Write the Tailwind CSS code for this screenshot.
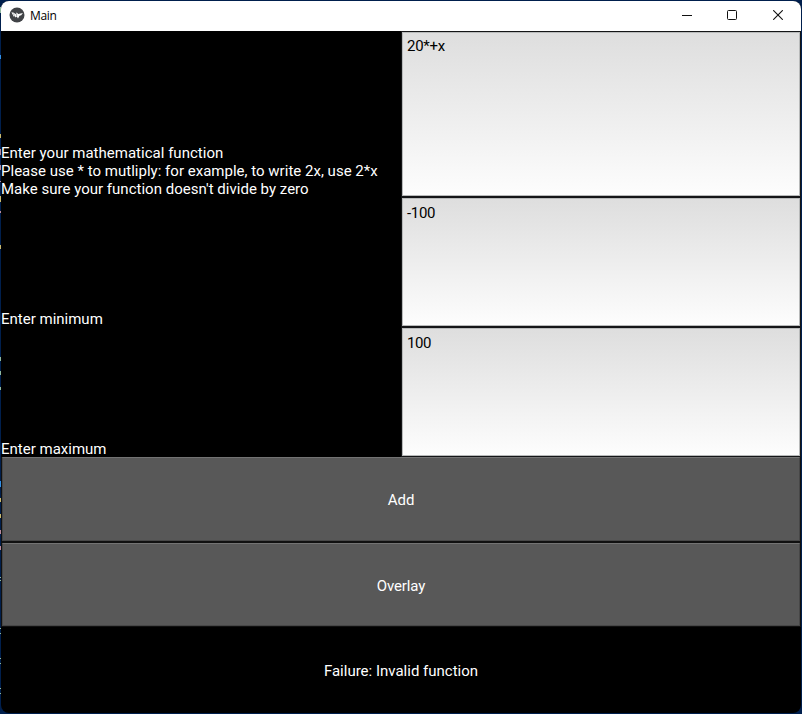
<!DOCTYPE html>
<html lang="en">
<head>
<meta charset="utf-8">
<title>Main</title>
<script src="https://cdn.jsdelivr.net/npm/@tailwindcss/browser@4"></script>
</head>
<body class="relative h-[714px] w-[802px] overflow-hidden bg-[#001f4d] p-px">
<!-- slivers of the desktop visible beside the window -->
<svg class="absolute left-0 top-0" width="1" height="714" shape-rendering="crispEdges">
  <path stroke="#8fb8a0" d="M.5 7v6M.5 357v4M.5 371v4M.5 387v3M.5 577v1M.5 580v1M.5 628v1M.5 633v1M.5 658v1M.5 663v1M.5 688v1M.5 693v1"/>
  <path stroke="#c8b870" d="M.5 134v4M.5 196v6M.5 245v4M.5 498v4M.5 514v4"/>
  <path stroke="#b98a9c" d="M.5 149v6M.5 165v5M.5 181v1M.5 211v2M.5 530v4M.5 546v4"/>
  <path stroke="#2f8fe8" d="M.5 55v4M.5 481v6"/>
</svg>
<main class="flex h-[712px] w-[800px] flex-col overflow-hidden rounded-lg bg-black font-['Roboto',sans-serif] text-[15px] leading-[18px] text-white">
  <header class="flex h-[30px] shrink-0 items-center bg-white pb-0.5 text-black">
    <svg class="ml-2 size-4" viewBox="0 0 16 16">
      <circle cx="8" cy="8" r="7.5" fill="#414347"/>
      <path d="M2.4 5.3 5 5.8 6.4 7.3 7.6 5.5 9.3 7.1 13.9 6 12.2 8.2 10.5 8.7 9 11.6 7.7 9.4 6.5 10.5 5.7 8.9 4.8 9.8Z" fill="#fff"/>
      <path d="m4.4 6.5 1 2.2M7.6 6.2v3" stroke="#55575a" stroke-width=".5"/>
    </svg>
    <h1 class="ml-[5px] pt-0.5 font-['Open_Sans',sans-serif] text-xs leading-4 tracking-[-0.3px]">Main</h1>
    <div class="ml-auto flex h-full items-center text-[#111]">
      <span class="flex w-[46px] justify-center"><svg width="10" height="10"><path d="M0 5.5h10" stroke="currentColor"/></svg></span>
      <span class="flex w-11 justify-center"><svg width="10" height="10"><rect x=".5" y=".5" width="9" height="9" rx="1" fill="none" stroke="currentColor"/></svg></span>
      <span class="flex w-[47px] justify-center pl-px"><svg width="10" height="10"><path d="m.2.2 9.6 9.6M9.8.2.2 9.8" stroke="currentColor" stroke-width="1.1"/></svg></span>
    </div>
  </header>
  <section class="grid h-[426px] shrink-0 grid-cols-2 grid-rows-[166px_130px_130px]">
    <div class="-mb-px flex items-end">
      <p class="whitespace-nowrap tracking-[0.015px]">Enter your mathematical function<br>Please use * to mutliply: for example, to write 2x, use 2*x<br>Make sure your function doesn't divide by zero</p>
    </div>
    <div class="bg-[#141517] p-px"><div class="h-full border border-[#b8baba] bg-linear-to-b from-[#dedede] to-[#fdfdfd] px-1 pt-1 tracking-[-0.25px] text-black">20*+x</div></div>
    <div class="-mb-px flex items-end"><p>Enter minimum</p></div>
    <div class="bg-[#141517] p-px"><div class="h-full border border-[#b8baba] bg-linear-to-b from-[#dedede] to-[#fdfdfd] px-1 pt-[5px] tracking-[-0.3px] text-black">-100</div></div>
    <div class="-mb-px flex items-end"><p>Enter maximum</p></div>
    <div class="bg-[#141517] p-px"><div class="h-full border border-[#b8baba] bg-linear-to-b from-[#dedede] to-[#fdfdfd] px-1 pt-[5px] tracking-[-0.4px] text-black">100</div></div>
  </section>
  <div class="h-[85px] shrink-0 bg-[#101010] px-px pb-px"><button class="flex size-full items-center justify-center border border-[#474747] border-t-[#737373] bg-[#585858] pt-px">Add</button></div>
  <div class="h-[85px] shrink-0 bg-[#101010] p-px"><button class="flex size-full items-center justify-center border border-[#474747] border-t-[#737373] bg-[#585858] pt-0.5 tracking-[-0.1px]">Overlay</button></div>
  <p class="flex grow items-center justify-center pt-0.5">Failure: Invalid function</p>
</main>
</body>
</html>
